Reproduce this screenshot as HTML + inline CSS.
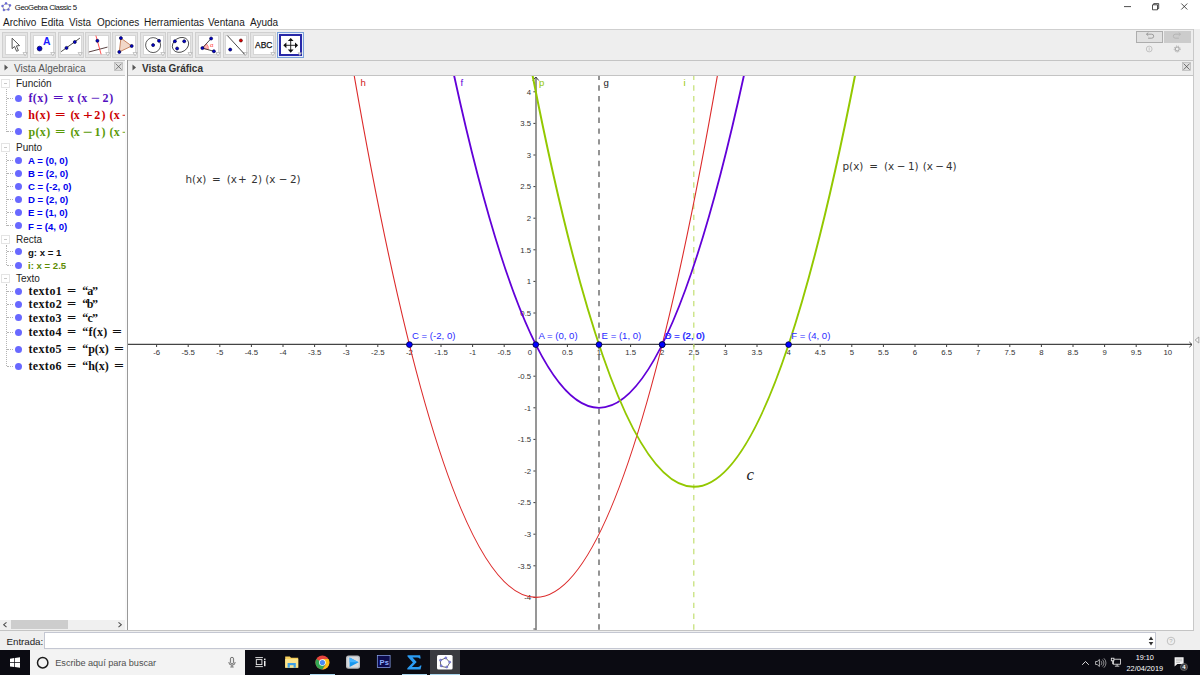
<!DOCTYPE html>
<html lang="es"><head><meta charset="utf-8"><title>GeoGebra Classic 5</title>
<style>
*{box-sizing:border-box;margin:0;padding:0}
html,body{width:1200px;height:675px;overflow:hidden;background:#fff}
body{position:relative;font-family:"Liberation Sans",sans-serif;color:#222;font-size:10px}
.abs{position:absolute}
#title{left:0;top:0;width:1200px;height:14px;background:#fff}
#title .t{left:14.8px;top:2.7px;font-size:7.8px;color:#111;line-height:10px;white-space:nowrap;letter-spacing:-0.47px}
#menu{left:0;top:14px;width:1200px;height:15px;background:#fff}
#menu span{position:absolute;top:2.5px;font-size:10px;line-height:12px;color:#1a1a1a;white-space:nowrap}
#tool{left:0;top:29px;width:1194px;height:32px;background:#eeeeee;border-top:1px solid #cfcfcf}
.tb{position:absolute;top:2px;width:26px;height:26px;background:#e4e4e4;border:1px solid #d0d0d0}
.tb i{position:absolute;left:1.7px;top:1.7px;width:21.4px;height:20.6px;background:#fff;border:1px solid #d6d6d6;display:block}
.tb svg{position:absolute;left:0;top:0}
.tb.sel{border:1px solid #7aa0d8;background:#e8eefc}
.tb.sel{width:26.8px;height:26.2px}
.tb.sel i{border:2px solid #2828a8;left:0.9px;top:0.9px;width:23px;height:22.4px}
#rightstrip{left:1193px;top:29px;width:7px;height:621px;background:#efefef;border-left:1px solid #c8c8c8}
.hdr{top:60px;height:16px;background:#efefef;border-top:1px solid #c4c4c4;border-bottom:1px solid #c4c4c4}
.hdr .t{position:absolute;top:2px;font-size:10px;line-height:12px;white-space:nowrap}
#alg{left:0;top:76px;width:125px;height:555px;background:#fff;overflow:hidden}
#div1{left:125px;top:60px;width:3px;height:570px;background:#fafafa;border-right:1px solid #999}
.row{position:absolute;left:0;white-space:nowrap}
.cat{font-size:10px;line-height:12px;color:#222;left:16px}
.pt{font-size:9.6px;line-height:12px;font-weight:bold;color:#0000ee;left:28px}
.fx{font-family:"Liberation Serif",serif;font-weight:bold;font-size:12px;line-height:14px}
.dot{position:absolute;left:14.5px;width:7px;height:7px;border-radius:50%;background:#6868ff}
.box{position:absolute;left:1px;width:9px;height:9px;border:1px solid #e4e4e4;background:#fff}
.box:after{content:"";position:absolute;left:2px;top:3px;width:3px;height:1px;background:#c8c8c8}
#input{left:0;top:630px;width:1194px;height:20px;background:#efefef;border-top:1px solid #c4c4c4}
#task{left:0;top:650px;width:1200px;height:25px;background:#0b0b12}
.tk{position:absolute;white-space:nowrap}
.vl{position:absolute;left:6px;width:0;border-left:1px dotted #b4b4b4}
.hl{position:absolute;left:7px;width:6px;height:0;border-top:1px dotted #b4b4b4}
</style></head><body>
<div id="title" class="abs">
<svg class="abs" style="left:0;top:0" width="14" height="14" viewBox="0 0 14 14"><path d="M6 3.4L10 5.4L8.4 9.5L3.9 10L2.5 6Z" fill="none" stroke="#a0a0a0" stroke-width="0.9"/><g fill="#6a6ae0" stroke="#4a4ab8" stroke-width="0.3"><circle cx="6" cy="3.4" r="1.05"/><circle cx="10" cy="5.4" r="1.05"/><circle cx="8.4" cy="9.5" r="1.05"/><circle cx="3.9" cy="10" r="1.05"/><circle cx="2.5" cy="6" r="1.05"/></g></svg>
<div class="abs t">GeoGebra Classic 5</div>
<svg class="abs" style="left:1110px;top:0" width="90" height="14" viewBox="0 0 90 14"><g stroke="#222" stroke-width="0.8" fill="none"><path d="M14 6.6h7"/><path d="M42.5 4.8h5v5h-5z M43.7 4.8v-1.2h5v5h-1.2"/><path d="M71.3 3.5l6 6M77.3 3.5l-6 6"/></g></svg>
</div>
<div id="menu" class="abs">
<span style="left:3px">Archivo</span><span style="left:41px">Edita</span><span style="left:69px">Vista</span><span style="left:97px">Opciones</span><span style="left:144px">Herramientas</span><span style="left:208px">Ventana</span><span style="left:250px">Ayuda</span>
</div>
<div id="tool" class="abs">
<div class="tb" style="left:2.4px"><i></i></div>
<div class="tb" style="left:30.1px"><i></i></div>
<div class="tb" style="left:57.5px"><i></i></div>
<div class="tb" style="left:85.1px"><i></i></div>
<div class="tb" style="left:112.4px"><i></i></div>
<div class="tb" style="left:140.2px"><i></i></div>
<div class="tb" style="left:167.4px"><i></i></div>
<div class="tb" style="left:195.3px"><i></i></div>
<div class="tb" style="left:222.5px"><i></i></div>
<div class="tb" style="left:250.2px"><i></i></div>
<div class="tb sel" style="left:277.3px"><i></i></div>
<svg class="abs" style="left:0;top:-1px" width="320" height="33" viewBox="0 29 320 33"><path d="M23.0 52.6h4.2l-2.1 3.1z" fill="#fff" stroke="#a8a8a8" stroke-width="0.7"/><path d="M50.7 52.6h4.2l-2.1 3.1z" fill="#fff" stroke="#a8a8a8" stroke-width="0.7"/><path d="M78.1 52.6h4.2l-2.1 3.1z" fill="#fff" stroke="#a8a8a8" stroke-width="0.7"/><path d="M105.7 52.6h4.2l-2.1 3.1z" fill="#fff" stroke="#a8a8a8" stroke-width="0.7"/><path d="M133.0 52.6h4.2l-2.1 3.1z" fill="#fff" stroke="#a8a8a8" stroke-width="0.7"/><path d="M160.8 52.6h4.2l-2.1 3.1z" fill="#fff" stroke="#a8a8a8" stroke-width="0.7"/><path d="M188.0 52.6h4.2l-2.1 3.1z" fill="#fff" stroke="#a8a8a8" stroke-width="0.7"/><path d="M215.9 52.6h4.2l-2.1 3.1z" fill="#fff" stroke="#a8a8a8" stroke-width="0.7"/><path d="M243.1 52.6h4.2l-2.1 3.1z" fill="#fff" stroke="#a8a8a8" stroke-width="0.7"/><path d="M270.8 52.6h4.2l-2.1 3.1z" fill="#fff" stroke="#a8a8a8" stroke-width="0.7"/><path d="M298 52.8h3.6l-1.8 2.6z" fill="#ddd" stroke="#aaa" stroke-width="0.6"/><path d="M12.1 38.2L12.1 48.6L14.6 46.5L16.6 51.3L18.4 50.5L16.4 45.9L19.6 45.6Z" fill="#fff" stroke="#444" stroke-width="0.9" stroke-linejoin="round"/><circle cx="39.6" cy="48.6" r="2.4" fill="#0000d0" stroke="#000040" stroke-width="0.7"/><text x="42.9" y="45" font-family="Liberation Sans, sans-serif" font-weight="bold" font-size="10.4" fill="#1c1cff">A</text><path d="M61.1 51.7L79.9 38.1" stroke="#333" stroke-width="0.9"/><circle cx="66.5" cy="47.9" r="1.5" fill="#0000d0" stroke="#000040" stroke-width="0.7"/><circle cx="74.8" cy="42" r="1.5" fill="#0000d0" stroke="#000040" stroke-width="0.7"/><path d="M88.8 52L107.5 47.1" stroke="#4a3030" stroke-width="0.9"/><path d="M95.9 35.6L101.1 54.3" stroke="#ff4040" stroke-width="0.9"/><circle cx="97.4" cy="40.8" r="1.5" fill="#0000d0" stroke="#000040" stroke-width="0.7"/><path d="M120.9 38.1L131.7 46L119.3 51.9Z" fill="#f2d8c8" stroke="#c27a55" stroke-width="0.9"/><circle cx="120.9" cy="38.1" r="1.5" fill="#0000d0" stroke="#000040" stroke-width="0.7"/><circle cx="131.7" cy="46.0" r="1.5" fill="#0000d0" stroke="#000040" stroke-width="0.7"/><circle cx="119.3" cy="51.9" r="1.5" fill="#0000d0" stroke="#000040" stroke-width="0.7"/><circle cx="153.1" cy="45.1" r="7.5" fill="none" stroke="#333" stroke-width="0.8"/><circle cx="153.1" cy="45.1" r="1.5" fill="#0000d0" stroke="#000040" stroke-width="0.7"/><circle cx="159" cy="40.8" r="1.5" fill="#0000d0" stroke="#000040" stroke-width="0.7"/><ellipse cx="180.5" cy="44.9" rx="8.6" ry="7" transform="rotate(-32 180.5 44.9)" fill="none" stroke="#333" stroke-width="0.8"/><circle cx="174.9" cy="41.3" r="1.5" fill="#0000d0" stroke="#000040" stroke-width="0.7"/><circle cx="184.2" cy="41.3" r="1.5" fill="#0000d0" stroke="#000040" stroke-width="0.7"/><circle cx="177.1" cy="48.5" r="1.5" fill="#0000d0" stroke="#000040" stroke-width="0.7"/><path d="M202.4 48.1L206.4 43.7A6 6 0 0 1 208.2 49.7Z" fill="#ffb8b8" stroke="#ff5050" stroke-width="0.6"/><path d="M211.1 38.5L202.4 48.1L213.9 51.3" fill="none" stroke="#333" stroke-width="0.9"/><circle cx="211.1" cy="38.5" r="1.5" fill="#0000d0" stroke="#000040" stroke-width="0.7"/><circle cx="202.4" cy="48.1" r="1.5" fill="#0000d0" stroke="#000040" stroke-width="0.7"/><circle cx="213.9" cy="51.3" r="1.5" fill="#0000d0" stroke="#000040" stroke-width="0.7"/><text x="210" y="47.4" font-family="Liberation Sans, sans-serif" font-size="6" fill="#ff3030">α</text><path d="M227.4 35.6L244.6 54.3" stroke="#333" stroke-width="0.9"/><circle cx="230.2" cy="49.6" r="1.5" fill="#0000d0" stroke="#000040" stroke-width="0.7"/><circle cx="240.9" cy="40.5" r="1.5" fill="#e00000" stroke="#500000" stroke-width="0.7"/><text x="255.1" y="48.2" font-family="Liberation Sans, sans-serif" font-size="9.2" fill="#111" stroke="#111" stroke-width="0.25" textLength="17.4" lengthAdjust="spacingAndGlyphs">ABC</text><path d="M290.7 39.8v11M285.2 45.3h11" stroke="#111" stroke-width="0.9"/><path d="M290.7 37.9l2.9 3.1h-5.8zM290.7 52.699999999999996l2.9 -3.1h-5.8zM283.3 45.3l3.1 -2.9v5.8zM298.09999999999997 45.3l-3.1 -2.9v5.8z" fill="#111"/></svg>
<div class="abs" style="left:1136px;top:1px;width:27px;height:12px;background:#e1e1e1;border:1px solid #adadad"></div>
<div class="abs" style="left:1164px;top:1px;width:27px;height:12px;background:#cccccc"></div>
<svg class="abs" style="left:1130px;top:-1px" width="64" height="32" viewBox="1130 30 64 32"><g fill="none" stroke-width="0.8"><path d="M1146.5 35.2h5.2a2 2 0 0 1 0 4h-3.6" stroke="#8a8a8a"/><path d="M1148.3 33.6l-1.8 1.6l1.8 1.6" stroke="#8a8a8a"/><path d="M1180.5 35.2h-5.2a2 2 0 0 0 0 4h3.6" stroke="#b0b0b0"/><path d="M1178.7 33.6l1.8 1.6l-1.8 1.6" stroke="#b0b0b0"/><circle cx="1149.2" cy="50" r="2.9" stroke="#b0b0b0" stroke-width="0.7"/><path d="M1149.2 48.3v3.4" stroke="#b8b8b8" stroke-width="0.7"/><circle cx="1177.2" cy="50" r="2" stroke="#999" stroke-width="0.9"/><circle cx="1177.2" cy="50" r="3" stroke="#aaa" stroke-width="1" stroke-dasharray="1 1.1"/></g></svg>
</div>
<div id="rightstrip" class="abs"><svg class="abs" style="left:0;top:306.5px" width="6" height="8" viewBox="0 0 6 8"><path d="M4.8 1L1.2 4L4.8 7Z" fill="#f8f8f8" stroke="#8a8a8a" stroke-width="0.7"/></svg></div>
<!-- algebra header -->
<div class="abs hdr" style="left:0;width:125px"><svg class="abs" style="left:4px;top:3.4px" width="5" height="7"><path d="M0.5 0.5L4 3.5L0.5 6.5z" fill="#555"/></svg><div class="t" style="left:14px;color:#555">Vista Algebraica</div>
<svg class="abs" style="left:114px;top:1px" width="10" height="10" viewBox="0 0 10 10"><rect x="0.6" y="0.6" width="8" height="8" fill="#dedede" stroke="#b8b8b8" stroke-width="0.7"/><path d="M1.6 1.6l6 6M7.6 1.6l-6 6" stroke="#555" stroke-width="0.7"/></svg></div>
<div id="div1" class="abs"></div>
<div class="abs hdr" style="left:128px;width:1065px"><svg class="abs" style="left:4px;top:3.4px" width="5" height="7"><path d="M0.5 0.5L4 3.5L0.5 6.5z" fill="#555"/></svg><div class="t" style="left:14px;color:#333;font-weight:bold;font-size:10px">Vista Gráfica</div>
<svg class="abs" style="left:1054px;top:1px" width="10" height="10" viewBox="0 0 10 10"><rect x="0.6" y="0.6" width="8" height="8" fill="#dedede" stroke="#b8b8b8" stroke-width="0.7"/><path d="M1.6 1.6l6 6M7.6 1.6l-6 6" stroke="#444" stroke-width="0.7"/></svg></div>
<div id="alg" class="abs">
<div class="box" style="top:2.7px"></div>
<div class="row cat" style="top:2.0px">Función</div>
<div class="vl" style="top:13.0px;height:42.8px"></div>
<div class="hl" style="top:21.7px"></div>
<div class="hl" style="top:38.3px"></div>
<div class="hl" style="top:55.3px"></div>
<div class="dot" style="top:18.7px"></div>
<span class="fx tk" style="left:28.4px;top:15.4px;color:#5310c0;letter-spacing:0.43px">f(x)</span>
<span class="fx tk" style="left:53.3px;top:15.4px;color:#5310c0;transform:scaleX(1.54);transform-origin:0 0">=</span>
<span class="fx tk" style="left:68.0px;top:15.4px;color:#5310c0;letter-spacing:0.07px">x (x</span>
<span class="fx tk" style="left:91.1px;top:15.4px;color:#5310c0;transform:scaleX(1.34);transform-origin:0 0">−</span>
<span class="fx tk" style="left:102.4px;top:15.4px;color:#5310c0;letter-spacing:0.80px">2)</span>
<div class="dot" style="top:35.3px"></div>
<span class="fx tk" style="left:28.2px;top:32.0px;color:#cc0000;letter-spacing:0.47px">h(x)</span>
<span class="fx tk" style="left:54.9px;top:32.0px;color:#cc0000;transform:scaleX(1.55);transform-origin:0 0">=</span>
<span class="fx tk" style="left:70.5px;top:32.0px;color:#cc0000;letter-spacing:-0.70px">(x</span>
<span class="fx tk" style="left:83.1px;top:32.0px;color:#cc0000;transform:scaleX(1.43);transform-origin:0 0">+</span>
<span class="fx tk" style="left:94.3px;top:32.0px;color:#cc0000;letter-spacing:1.20px">2)</span>
<span class="fx tk" style="left:109.5px;top:32.0px;color:#cc0000;letter-spacing:0.20px">(x</span>
<span class="fx tk" style="left:122.2px;top:32.0px;color:#cc0000;transform:scaleX(1.25);transform-origin:0 0">−</span>
<div class="dot" style="top:52.3px"></div>
<span class="fx tk" style="left:28.4px;top:49.0px;color:#5a9a08;letter-spacing:0.40px">p(x)</span>
<span class="fx tk" style="left:54.9px;top:49.0px;color:#5a9a08;transform:scaleX(1.55);transform-origin:0 0">=</span>
<span class="fx tk" style="left:70.5px;top:49.0px;color:#5a9a08;letter-spacing:-0.70px">(x</span>
<span class="fx tk" style="left:83.1px;top:49.0px;color:#5a9a08;transform:scaleX(1.43);transform-origin:0 0">−</span>
<span class="fx tk" style="left:94.4px;top:49.0px;color:#5a9a08;letter-spacing:1.10px">1)</span>
<span class="fx tk" style="left:109.5px;top:49.0px;color:#5a9a08;letter-spacing:0.20px">(x</span>
<span class="fx tk" style="left:122.2px;top:49.0px;color:#5a9a08;transform:scaleX(1.25);transform-origin:0 0">−</span>
<div class="box" style="top:66.5px"></div>
<div class="row cat" style="top:65.8px">Punto</div>
<div class="vl" style="top:77.0px;height:72.8px"></div>
<div class="hl" style="top:83.8px"></div>
<div class="hl" style="top:96.9px"></div>
<div class="hl" style="top:109.9px"></div>
<div class="hl" style="top:123.0px"></div>
<div class="hl" style="top:136.2px"></div>
<div class="hl" style="top:149.3px"></div>
<div class="dot" style="top:80.8px"></div>
<div class="row pt" style="top:79.0px">A = (0, 0)</div>
<div class="dot" style="top:93.9px"></div>
<div class="row pt" style="top:92.1px">B = (2, 0)</div>
<div class="dot" style="top:106.9px"></div>
<div class="row pt" style="top:105.1px">C = (-2, 0)</div>
<div class="dot" style="top:120.0px"></div>
<div class="row pt" style="top:118.2px">D = (2, 0)</div>
<div class="dot" style="top:133.2px"></div>
<div class="row pt" style="top:131.4px">E = (1, 0)</div>
<div class="dot" style="top:146.3px"></div>
<div class="row pt" style="top:144.5px">F = (4, 0)</div>
<div class="box" style="top:158.5px"></div>
<div class="row cat" style="top:157.8px">Recta</div>
<div class="vl" style="top:169.0px;height:20.0px"></div>
<div class="hl" style="top:175.0px"></div>
<div class="hl" style="top:188.5px"></div>
<div class="dot" style="top:172.0px"></div>
<div class="row pt" style="top:170.5px;color:#111">g: x = 1</div>
<div class="dot" style="top:185.5px"></div>
<div class="row pt" style="top:183.8px;color:#5d8c00">i: x = 2.5</div>
<div class="box" style="top:197.7px"></div>
<div class="row cat" style="top:197.0px">Texto</div>
<div class="vl" style="top:208.0px;height:82.0px"></div>
<div class="hl" style="top:214.9px"></div>
<div class="hl" style="top:227.9px"></div>
<div class="hl" style="top:241.3px"></div>
<div class="hl" style="top:255.8px"></div>
<div class="hl" style="top:272.8px"></div>
<div class="hl" style="top:289.5px"></div>
<div class="dot" style="top:211.9px"></div>
<span class="fx tk" style="left:28.5px;top:208.3px;color:#111;letter-spacing:0.40px">texto1</span>
<span class="fx tk" style="left:66.9px;top:208.3px;color:#111;transform:scaleX(1.36);transform-origin:0 0">=</span>
<span class="fx tk" style="left:82.3px;top:208.3px;color:#111;letter-spacing:-1.15px">“a”</span>
<div class="dot" style="top:224.9px"></div>
<span class="fx tk" style="left:28.5px;top:221.3px;color:#111;letter-spacing:0.38px">texto2</span>
<span class="fx tk" style="left:66.9px;top:221.3px;color:#111;transform:scaleX(1.36);transform-origin:0 0">=</span>
<span class="fx tk" style="left:82.3px;top:221.3px;color:#111;letter-spacing:-1.50px">“b”</span>
<div class="dot" style="top:238.3px"></div>
<span class="fx tk" style="left:28.5px;top:234.7px;color:#111;letter-spacing:0.36px">texto3</span>
<span class="fx tk" style="left:66.9px;top:234.7px;color:#111;transform:scaleX(1.36);transform-origin:0 0">=</span>
<span class="fx tk" style="left:82.3px;top:234.7px;color:#111;letter-spacing:-0.80px">“c”</span>
<div class="dot" style="top:252.8px"></div>
<span class="fx tk" style="left:28.5px;top:249.2px;color:#111;letter-spacing:0.32px">texto4</span>
<span class="fx tk" style="left:66.9px;top:249.2px;color:#111;transform:scaleX(1.36);transform-origin:0 0">=</span>
<span class="fx tk" style="left:82.3px;top:249.2px;color:#111;letter-spacing:0.22px">“f(x)</span>
<span class="fx tk" style="left:112.3px;top:249.2px;color:#111;transform:scaleX(1.46);transform-origin:0 0">=</span>
<div class="dot" style="top:269.8px"></div>
<span class="fx tk" style="left:28.5px;top:266.2px;color:#111;letter-spacing:0.36px">texto5</span>
<span class="fx tk" style="left:66.9px;top:266.2px;color:#111;transform:scaleX(1.36);transform-origin:0 0">=</span>
<span class="fx tk" style="left:82.3px;top:266.2px;color:#111;letter-spacing:-0.05px">“p(x)</span>
<span class="fx tk" style="left:113.9px;top:266.2px;color:#111;transform:scaleX(1.46);transform-origin:0 0">=</span>
<div class="dot" style="top:286.5px"></div>
<span class="fx tk" style="left:28.5px;top:282.9px;color:#111;letter-spacing:0.34px">texto6</span>
<span class="fx tk" style="left:66.9px;top:282.9px;color:#111;transform:scaleX(1.36);transform-origin:0 0">=</span>
<span class="fx tk" style="left:82.3px;top:282.9px;color:#111;letter-spacing:-0.05px">“h(x)</span>
<span class="fx tk" style="left:113.9px;top:282.9px;color:#111;transform:scaleX(1.46);transform-origin:0 0">=</span>
<div class="abs" style="left:0;top:544px;width:125px;height:9.6px;background:#f0f0f0"><div class="abs" style="left:11px;top:0;width:56.8px;height:8.9px;background:#cdcdcd"></div><svg class="abs" style="left:0;top:0" width="126" height="10"><path d="M6.5 2.3L3.7 4.7L6.5 7.1M118.5 2.3L121.3 4.7L118.5 7.1" fill="none" stroke="#505050" stroke-width="1.1"/></svg></div>
</div>
<svg id="gv" width="1065" height="554" viewBox="128 76 1065 554" style="position:absolute;left:128px;top:76px;background:#fff;overflow:hidden">
<g stroke="#3c3c3c" stroke-width="1" fill="none">
<line x1="536.0" y1="77" x2="536.0" y2="630" stroke="#8c8c8c" stroke-width="1.8"/>
<line x1="128" y1="344.4" x2="1192" y2="344.4" stroke="#444" stroke-width="1.2"/>
<path d="M1189.4 342.0 l2.6 2.6 l-2.6 2.6"/>
<path d="M532.8 80.5 l3 -3.5 l3 3.5"/>
<path d="M156.6 344.6 v2.4 M188.2 344.6 v2.4 M219.8 344.6 v2.4 M251.4 344.6 v2.4 M283.0 344.6 v2.4 M314.6 344.6 v2.4 M346.2 344.6 v2.4 M377.8 344.6 v2.4 M409.4 344.6 v2.4 M441.0 344.6 v2.4 M472.6 344.6 v2.4 M504.2 344.6 v2.4 M567.4 344.6 v2.4 M599.0 344.6 v2.4 M630.6 344.6 v2.4 M662.2 344.6 v2.4 M693.8 344.6 v2.4 M725.4 344.6 v2.4 M757.0 344.6 v2.4 M788.6 344.6 v2.4 M820.2 344.6 v2.4 M851.8 344.6 v2.4 M883.4 344.6 v2.4 M915.0 344.6 v2.4 M946.6 344.6 v2.4 M978.2 344.6 v2.4 M1009.8 344.6 v2.4 M1041.4 344.6 v2.4 M1073.0 344.6 v2.4 M1104.6 344.6 v2.4 M1136.2 344.6 v2.4 M1167.8 344.6 v2.4 M535.4 629.0 h-2 M535.4 597.4 h-2 M535.4 565.8 h-2 M535.4 534.2 h-2 M535.4 502.6 h-2 M535.4 471.0 h-2 M535.4 439.4 h-2 M535.4 407.8 h-2 M535.4 376.2 h-2 M535.4 313.0 h-2 M535.4 281.4 h-2 M535.4 249.8 h-2 M535.4 218.2 h-2 M535.4 186.6 h-2 M535.4 155.0 h-2 M535.4 123.4 h-2 M535.4 91.8 h-2"/>
</g>
<g font-family="Liberation Sans, sans-serif" font-size="7.8" fill="#333">
<text x="156.6" y="354.7" text-anchor="middle">-6</text>
<text x="188.2" y="354.7" text-anchor="middle">-5.5</text>
<text x="219.8" y="354.7" text-anchor="middle">-5</text>
<text x="251.4" y="354.7" text-anchor="middle">-4.5</text>
<text x="283.0" y="354.7" text-anchor="middle">-4</text>
<text x="314.6" y="354.7" text-anchor="middle">-3.5</text>
<text x="346.2" y="354.7" text-anchor="middle">-3</text>
<text x="377.8" y="354.7" text-anchor="middle">-2.5</text>
<text x="409.4" y="354.7" text-anchor="middle">-2</text>
<text x="441.0" y="354.7" text-anchor="middle">-1.5</text>
<text x="472.6" y="354.7" text-anchor="middle">-1</text>
<text x="504.2" y="354.7" text-anchor="middle">-0.5</text>
<text x="567.4" y="354.7" text-anchor="middle">0.5</text>
<text x="599.0" y="354.7" text-anchor="middle">1</text>
<text x="630.6" y="354.7" text-anchor="middle">1.5</text>
<text x="662.2" y="354.7" text-anchor="middle">2</text>
<text x="693.8" y="354.7" text-anchor="middle">2.5</text>
<text x="725.4" y="354.7" text-anchor="middle">3</text>
<text x="757.0" y="354.7" text-anchor="middle">3.5</text>
<text x="788.6" y="354.7" text-anchor="middle">4</text>
<text x="820.2" y="354.7" text-anchor="middle">4.5</text>
<text x="851.8" y="354.7" text-anchor="middle">5</text>
<text x="883.4" y="354.7" text-anchor="middle">5.5</text>
<text x="915.0" y="354.7" text-anchor="middle">6</text>
<text x="946.6" y="354.7" text-anchor="middle">6.5</text>
<text x="978.2" y="354.7" text-anchor="middle">7</text>
<text x="1009.8" y="354.7" text-anchor="middle">7.5</text>
<text x="1041.4" y="354.7" text-anchor="middle">8</text>
<text x="1073.0" y="354.7" text-anchor="middle">8.5</text>
<text x="1104.6" y="354.7" text-anchor="middle">9</text>
<text x="1136.2" y="354.7" text-anchor="middle">9.5</text>
<text x="1167.8" y="354.7" text-anchor="middle">10</text>
<text x="530.0" y="354.7" text-anchor="middle">0</text>
<text x="531.2" y="600.2" text-anchor="end">-4</text>
<text x="531.2" y="568.6" text-anchor="end">-3.5</text>
<text x="531.2" y="537.0" text-anchor="end">-3</text>
<text x="531.2" y="505.4" text-anchor="end">-2.5</text>
<text x="531.2" y="473.8" text-anchor="end">-2</text>
<text x="531.2" y="442.2" text-anchor="end">-1.5</text>
<text x="531.2" y="410.6" text-anchor="end">-1</text>
<text x="531.2" y="379.0" text-anchor="end">-0.5</text>
<text x="531.2" y="315.8" text-anchor="end">0.5</text>
<text x="531.2" y="284.2" text-anchor="end">1</text>
<text x="531.2" y="252.6" text-anchor="end">1.5</text>
<text x="531.2" y="221.0" text-anchor="end">2</text>
<text x="531.2" y="189.4" text-anchor="end">2.5</text>
<text x="531.2" y="157.8" text-anchor="end">3</text>
<text x="531.2" y="126.2" text-anchor="end">3.5</text>
<text x="531.2" y="94.6" text-anchor="end">4</text>
</g>
<line x1="599.0" y1="76" x2="599.0" y2="630" stroke="#727272" stroke-width="1.5" stroke-dasharray="5.4 5.38" stroke-dashoffset="1.5"/>
<line x1="693.8" y1="76" x2="693.8" y2="630" stroke="#c2df72" stroke-width="1.2" stroke-dasharray="5.4 5.38" stroke-dashoffset="1.5"/>
<path d="M353.17 69.68 Q535.80 1125.12 718.43 69.68" fill="none" stroke="#dc2a2a" stroke-width="1.1"/>
<path d="M452.82 69.68 Q599.00 745.92 745.18 69.68" fill="none" stroke="#6200d8" stroke-width="1.85"/>
<path d="M531.44 69.68 Q693.80 903.92 856.16 69.68" fill="none" stroke="#93c800" stroke-width="2"/>
<circle cx="409.4" cy="344.6" r="2.9" fill="#0000ff" stroke="#00003c" stroke-width="0.8"/>
<circle cx="535.8" cy="344.6" r="2.9" fill="#0000ff" stroke="#00003c" stroke-width="0.8"/>
<circle cx="599.0" cy="344.6" r="2.9" fill="#0000ff" stroke="#00003c" stroke-width="0.8"/>
<circle cx="662.2" cy="344.6" r="2.9" fill="#0000ff" stroke="#00003c" stroke-width="0.8"/>
<circle cx="662.2" cy="344.6" r="2.9" fill="#0000ff" stroke="#00003c" stroke-width="0.8"/>
<circle cx="788.6" cy="344.6" r="2.9" fill="#0000ff" stroke="#00003c" stroke-width="0.8"/>
<g font-family="Liberation Sans, sans-serif" font-size="9.6" fill="#2b2bff">
<text x="412.0" y="338.6">C = (-2, 0)</text>
<text x="538.4" y="338.6">A = (0, 0)</text>
<text x="601.6" y="338.6">E = (1, 0)</text>
<text x="664.8" y="338.6">B = (2, 0)</text>
<text x="664.8" y="338.6">D = (2, 0)</text>
<text x="791.2" y="338.6">F = (4, 0)</text>
</g>
<g font-family="Liberation Sans, sans-serif" font-size="9.6">
<text x="360.5" y="86" fill="#d02020">h</text>
<text x="460.5" y="86" fill="#6200d8">f</text>
<text x="539" y="86" fill="#93c800">p</text>
<text x="603.5" y="86" fill="#222">g</text>
<text x="683.5" y="86" fill="#93c800">i</text>
</g>
<g font-family="DejaVu Sans, Liberation Sans, sans-serif" font-size="10.4" fill="#333">
<text y="183.3"><tspan x="185.5">h(x)</tspan><tspan x="212">=</tspan><tspan x="226.7">(x</tspan><tspan x="238">+</tspan><tspan x="251.3">2)</tspan><tspan x="265.3">(x</tspan><tspan x="278.7">−</tspan><tspan x="290">2)</tspan></text>
<text y="170"><tspan x="842.5">p(x)</tspan><tspan x="869.3">=</tspan><tspan x="884">(x</tspan><tspan x="896.7">−</tspan><tspan x="908">1)</tspan><tspan x="922.7">(x</tspan><tspan x="935.3">−</tspan><tspan x="946">4)</tspan></text>
</g>
<text x="746.6" y="479.7" font-family="Liberation Serif, serif" font-style="italic" font-size="17" fill="#222">c</text>
</svg>
<div id="input" class="abs">
<div class="abs" style="left:6.5px;top:5px;font-size:9.8px;line-height:12px;color:#222;letter-spacing:-0.05px">Entrada:</div>
<div class="abs" style="left:44.4px;top:1.2px;width:1112px;height:16.4px;background:#fff;border:1px solid #c4c7d2"></div>
<svg class="abs" style="left:1147.5px;top:4.5px" width="6" height="10" viewBox="0 0 6 10"><path d="M3 0.5L5.3 4H0.7zM3 9.5L5.3 6H0.7z" fill="#333"/></svg>
<svg class="abs" style="left:1165.8px;top:4.5px" width="10" height="10" viewBox="0 0 10 10"><circle cx="5" cy="5" r="3.8" fill="none" stroke="#b5b5b5" stroke-width="0.8"/><text x="5" y="7.3" font-size="6" text-anchor="middle" fill="#b0b0b0" font-family="Liberation Sans, sans-serif">?</text></svg>
</div>
<div id="task" class="abs">
<div class="abs" style="left:30px;top:0;width:215px;height:25px;background:#f3f3f3"></div>
<div class="abs" style="left:55.3px;top:6.5px;font-size:9.2px;line-height:12px;color:#505050;white-space:nowrap;letter-spacing:-0.06px" id="srch">Escribe aquí para buscar</div>
<div class="abs" style="left:430px;top:0;width:30px;height:25px;background:#3a3b40"></div>
<div class="abs" style="left:310px;top:23.7px;width:25px;height:2px;background:#a9d6ee"></div>
<div class="abs" style="left:402px;top:23.7px;width:25px;height:2px;background:#a9d6ee"></div>
<div class="abs" style="left:430px;top:23.7px;width:30px;height:2px;background:#a9d6ee"></div>
<svg class="abs" style="left:0;top:0" width="1200" height="25" viewBox="0 650 1200 25"><path d="M10 658.7l4.2-0.6v4.1h-4.2zM14.9 658l5.1-0.7v4.9h-5.1zM10 662.9h4.2v4.1l-4.2-0.6zM14.9 662.9h5.1v4.9l-5.1-0.7z" fill="#fff"/><circle cx="42.7" cy="662.7" r="5.2" fill="none" stroke="#1c1c1c" stroke-width="1.5"/><g fill="none" stroke="#555" stroke-width="0.8"><rect x="230.4" y="657.3" width="3.2" height="6.6" rx="1.6" fill="#e8e8e8"/><path d="M228.8 662a3.2 3.2 0 0 0 6.4 0M232 665.2v1.8M230.3 667h3.4"/></g><g fill="none" stroke="#f0f0f0" stroke-width="0.9"><rect x="256.3" y="659.6" width="5.6" height="5"/><path d="M255.3 657.6h7.6M255.3 666.6h7.6"/></g><rect x="264" y="658.6" width="1.5" height="1.6" fill="#f0f0f0"/><rect x="264" y="661" width="1.5" height="5.2" fill="#f0f0f0"/><path d="M285.2 656.5h4.6l1.2 1.3h7.2v9.9h-13z" fill="#f7cf5c"/><path d="M285.2 659h13v8.7h-13z" fill="#fbe48c"/><path d="M287.6 663h8.2v4.7h-8.2z" fill="#3ea0e6"/><path d="M289.8 665.2h3.8v2.5h-3.8z" fill="#fbe48c"/><circle cx="322.4" cy="662.5" r="7" fill="#e8453c"/><path d="M322.4 662.5L316.34 659A7 7 0 0 0 322.4 669.5L325.9 663.4Z" fill="#34a853"/><path d="M322.4 662.5L325.9 664.5L322.4 669.5A7 7 0 0 0 328.46 659L322.4 659Z" fill="#fbc116"/><circle cx="322.4" cy="662.5" r="3.3" fill="#fff"/><circle cx="322.4" cy="662.5" r="2.6" fill="#4a8af4"/><rect x="346" y="655.5" width="14" height="13.2" rx="2.5" fill="#b9bcc0"/><rect x="347.2" y="656.7" width="11.6" height="10.8" rx="1.8" fill="#d9dcdf"/><path d="M349.6 657.6L358.6 662.3L349.6 667Z" fill="#1696ee"/><path d="M349.6 657.6L358.6 662.3L349.6 662.3Z" fill="#46b4ff"/><rect x="377.3" y="655.6" width="12.8" height="12" fill="#0c0b4e" stroke="#8fa9f2" stroke-width="0.7"/><text x="379.6" y="665" font-family="Liberation Sans, sans-serif" font-weight="bold" font-size="7.6" fill="#8fb0ff">Ps</text><path d="M407.5 655.2h12.6l0.6 3.4h-1.2q-0.6-1.2-2.4-1.2h-4.6l4.2 4.6l-4.8 5h5.8q1.8 0 2.6-1.6h1.2l-1 4h-13.2v-1.2l5.6-5.8l-5.4-6z" fill="#2b9cf2"/><rect x="437" y="655" width="15.6" height="14.6" rx="1.5" fill="#fff"/><path d="M444.8 657.9L449.7 661.3L447.9 667L441.7 667L439.9 661.3Z" fill="none" stroke="#555" stroke-width="0.8" transform="rotate(12 444.8 662.5)"/><circle cx="445.8" cy="657.9" r="1.1" fill="#8a8ce8" stroke="#4a4cb0" stroke-width="0.4"/><circle cx="449.7" cy="662.1" r="1.1" fill="#8a8ce8" stroke="#4a4cb0" stroke-width="0.4"/><circle cx="446.8" cy="667.0" r="1.1" fill="#8a8ce8" stroke="#4a4cb0" stroke-width="0.4"/><circle cx="441.2" cy="665.8" r="1.1" fill="#8a8ce8" stroke="#4a4cb0" stroke-width="0.4"/><circle cx="440.6" cy="660.2" r="1.1" fill="#8a8ce8" stroke="#4a4cb0" stroke-width="0.4"/><path d="M1082.2 664.8l3.3-3.3l3.3 3.3" fill="none" stroke="#f0f0f0" stroke-width="0.9"/><path d="M1095.6 661.5h1.6l2.2-2v7l-2.2-2h-1.6z" fill="none" stroke="#f0f0f0" stroke-width="0.7"/><path d="M1100.8 660.9a2.6 2.6 0 0 1 0 4.2M1102.3 659.5a4.6 4.6 0 0 1 0 7M1103.9 658.3a6.4 6.4 0 0 1 0 9.4" fill="none" stroke="#ddd" stroke-width="0.6"/><g fill="none" stroke="#f0f0f0" stroke-width="0.8"><rect x="1113.6" y="659.2" width="7" height="5"/><path d="M1117.1 664.2v1.8M1114.9 666.2h4.4"/><rect x="1111.3" y="658.2" width="2.6" height="2.6" fill="#0b0b12"/><path d="M1112.6 660.8v3.4"/></g><text x="1144.8" y="659.8" text-anchor="middle" font-family="Liberation Sans, sans-serif" font-size="7.3" fill="#fff">19:10</text><text x="1144.8" y="671" text-anchor="middle" font-family="Liberation Sans, sans-serif" font-size="7.3" fill="#fff" textLength="36.5" lengthAdjust="spacingAndGlyphs">22/04/2019</text><path d="M1174.6 657.2h9v6.8h-6.2l-2.8 2.4z" fill="#f4f4f4"/><path d="M1176 659.2h6.2M1176 660.8h6.2M1176 662.4h4" stroke="#888" stroke-width="0.5"/><circle cx="1184" cy="667" r="3.6" fill="#3a3a3e" stroke="#888" stroke-width="0.5"/><text x="1184" y="669.3" text-anchor="middle" font-family="Liberation Sans, sans-serif" font-size="6" font-weight="bold" fill="#fff">4</text></svg>
</div>
</body></html>
